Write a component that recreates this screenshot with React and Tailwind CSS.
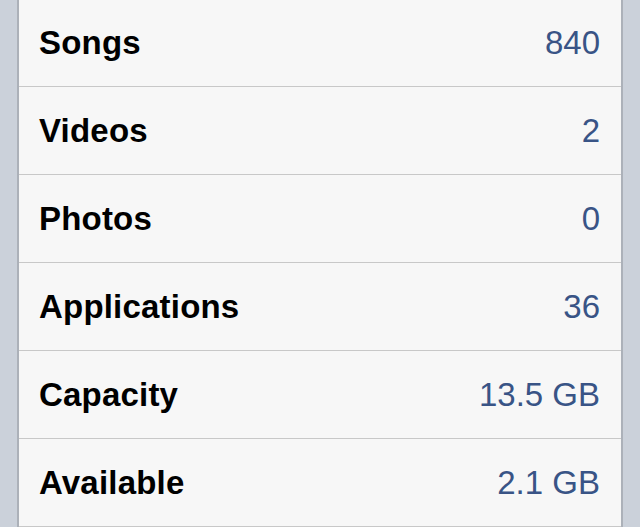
import React from 'react'

const rows = [
  { label: 'Songs', value: '840' },
  { label: 'Videos', value: '2' },
  { label: 'Photos', value: '0' },
  { label: 'Applications', value: '36' },
  { label: 'Capacity', value: '13.5 GB' },
  { label: 'Available', value: '2.1 GB' },
]

export default function App() {
  return (
    <div
      className="w-[640px] h-[527px] overflow-hidden bg-[#cbd1da] px-[17px]"
      style={{ fontFamily: '"Liberation Sans", Arial, Helvetica, sans-serif' }}
    >
      {/* grouped table */}
      <div className="-mt-px bg-[#f7f7f7] border-x-2 border-[#acb1b9]">
        {rows.map((row) => (
          <div
            key={row.label}
            className="h-[88px] flex items-center justify-between pl-[20px] pr-[21px] border-b border-[#c8c8c8]"
          >
            <span className="text-[33px] font-bold text-black tracking-[0.2px]">{row.label}</span>
            <span className="text-[33px] text-[#395486]">{row.value}</span>
          </div>
        ))}
      </div>
    </div>
  )
}
